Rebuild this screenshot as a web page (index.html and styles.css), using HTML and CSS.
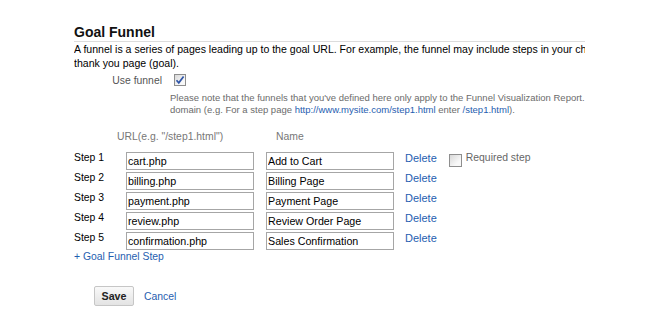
FILE: index.html
```html
<!DOCTYPE html>
<html lang="en">
<head>
  <meta charset="UTF-8" />
  <title>Goal Funnel</title>
  <link rel="stylesheet" href="styles.css">
</head>
<body>

  <div class="goal">
    <h2 class="goal-title">Goal Funnel</h2>
    <p class="intro">A funnel is a series of pages leading up to the goal URL. For example, the funnel may include steps in your checkout process that lead you to the<br>thank you page (goal).</p>

    <div class="use-row">
      <span class="use-label">Use funnel</span>
      <span class="box box-checked">
        <svg width="10" height="10" viewBox="0 0 10 10"><path d="M1.5 5.2 L3.8 7.8 L8.6 1.4" fill="none" stroke="#2f55a8" stroke-width="1.7"/></svg>
      </span>
    </div>
    <p class="note">Please note that the funnels that you've defined here only apply to the Funnel Visualization Report.<br>domain (e.g. For a step page <a href="#">http://www.mysite.com/step1.html</a> enter <a href="#">/step1.html</a>).</p>

    <div class="cols">
      <span class="col-url">URL(e.g. "/step1.html")</span>
      <span>Name</span>
    </div>

    <div class="steps">
      <div class="step">
        <span class="step-label">Step 1</span>
        <input class="field" type="text" value="cart.php">
        <input class="field field-name" type="text" value="Add to Cart">
        <a class="delete" href="#">Delete</a>
        <span class="box box-req"></span>
        <span class="req-label">Required step</span>
      </div>
      <div class="step">
        <span class="step-label">Step 2</span>
        <input class="field" type="text" value="billing.php">
        <input class="field field-name" type="text" value="Billing Page">
        <a class="delete" href="#">Delete</a>
      </div>
      <div class="step">
        <span class="step-label">Step 3</span>
        <input class="field" type="text" value="payment.php">
        <input class="field field-name" type="text" value="Payment Page">
        <a class="delete" href="#">Delete</a>
      </div>
      <div class="step">
        <span class="step-label">Step 4</span>
        <input class="field" type="text" value="review.php">
        <input class="field field-name" type="text" value="Review Order Page">
        <a class="delete" href="#">Delete</a>
      </div>
      <div class="step">
        <span class="step-label">Step 5</span>
        <input class="field" type="text" value="confirmation.php">
        <input class="field field-name" type="text" value="Sales Confirmation">
        <a class="delete" href="#">Delete</a>
      </div>
    </div>

    <a class="add-step" href="#">+ Goal Funnel Step</a>

    <div class="actions">
      <button class="save" type="button">Save</button>
      <a class="cancel" href="#">Cancel</a>
    </div>
  </div>

</body>
</html>
```

FILE: styles.css
```css
body {
  margin: 0;
  font-family: "Liberation Sans", Arial, sans-serif;
  font-size: 10.4px;
  color: #000;
  background: #fff;
}

a {
  color: #1f5eb0;
  text-decoration: none;
}

.goal {
  width: 511px;
  margin-left: 74px;
  padding-top: 24px;
  overflow: hidden;
}

.goal-title {
  margin: 0;
  font-size: 14px;
  line-height: 17px;
  font-weight: bold;
  color: #111;
  border-bottom: 1px solid #dcdcdc;
}

/* the original page is wider; the text runs past the frame */
.intro {
  margin: 0;
  font-size: 10.55px;
  line-height: 14px;
  white-space: nowrap;
}

.use-row {
  display: flex;
  align-items: flex-start;
  margin-top: 4px;
  line-height: 14px;
}

.use-label {
  width: 88px;
  text-align: right;
  color: #555;
}

.box {
  display: inline-flex;
  align-items: center;
  justify-content: center;
  box-sizing: border-box;
  border: 1px solid #8e8e8e;
  background: linear-gradient(135deg, #d8d8d8, #f8f8f8 70%);
}

.box-checked {
  width: 12px;
  height: 12px;
  margin-left: 12px;
}

.note {
  margin: 4px 0 0 96px;
  font-size: 9.5px;
  line-height: 12px;
  color: #6b6b6b;
  white-space: nowrap;
}

.cols {
  display: flex;
  margin-top: 14px;
  line-height: 14px;
  color: #777;
}

.col-url {
  width: 159px;
  padding-left: 43px;
}

.steps {
  margin-top: 6px;
}

.step {
  display: flex;
  align-items: flex-start;
  height: 20px;
  line-height: 16px;
}

.step-label {
  width: 52px;
}

.field {
  width: 128px;
  height: 18px;
  box-sizing: border-box;
  margin: 2px 0 0;
  padding: 0 1px;
  border: 1px solid #a6a6a6;
  font-family: "Liberation Sans", Arial, sans-serif;
  font-size: 10.7px;
  color: #000;
  background: #fff;
}

.field-name {
  margin-left: 12px;
}

.delete {
  margin-left: 11px;
  font-size: 11px;
}

.box-req {
  width: 13px;
  height: 13px;
  margin: 4px 0 0 12px;
}

.req-label {
  margin-left: 4px;
  color: #666;
}

.add-step {
  display: block;
  line-height: 14px;
  width: max-content;
}

.actions {
  display: flex;
  align-items: center;
  margin: 22px 0 0 20px;
}

.save {
  width: 40px;
  height: 20px;
  padding: 0;
  border: 1px solid #c6c6c6;
  border-radius: 2px;
  background: linear-gradient(#f9f9f9, #e3e3e3);
  font-family: "Liberation Sans", Arial, sans-serif;
  font-size: 10.7px;
  font-weight: bold;
  color: #222;
}

.cancel {
  margin-left: 10px;
}
```
